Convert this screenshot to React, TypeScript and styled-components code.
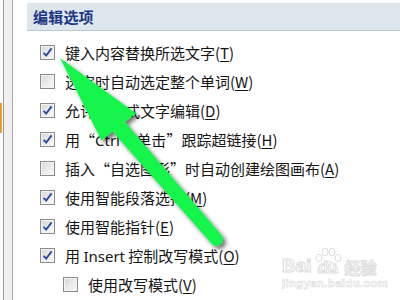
import React from "react"
import styled, { createGlobalStyle } from "styled-components"

const Global = createGlobalStyle`
    html, body {
        margin: 0;
        padding: 0;
        background: #fff;
    }
    body {
        width: 400px;
        height: 300px;
        overflow: hidden;
    }
`

const Page = styled.div`
    position: relative;
    width: 400px;
    height: 300px;
    display: flex;
    overflow: hidden;
    font-family: "Noto Sans CJK SC", "Noto Sans", sans-serif;
    color: #151515;
`

const SideStrip = styled.div`
    width: 3px;
    flex: none;
    display: flex;
    flex-direction: column;
`

const TabMark = styled.div`
    margin-top: 103px;
    width: 2px;
    height: 30px;
    background: linear-gradient(to right, #e88a1a, #f2b04a);
`

const SidePanel = styled.div`
    width: 8px;
    flex: none;
    background: #f0f0f0;
    border-left: 1px solid #9d9d9d;
    border-right: 1px solid #a8a8a8;
`

const Main = styled.div`
    flex: 1;
    padding-left: 14px;
    padding-top: 3px;
`

const Header = styled.div`
    height: 27px;
    display: flex;
    align-items: center;
    padding-left: 6px;
    background: #dee6ed;
    border-bottom: 1px solid #c3c6c9;
    font-size: 15px;
    font-weight: bold;
    color: #1b3682;
    letter-spacing: 0.2px;
`

const List = styled.div`
    padding-top: 7px;
    display: flex;
    flex-direction: column;
`

const Row = styled.div<{ $indent?: boolean }>`
    height: 29px;
    display: flex;
    align-items: center;
    gap: 10px;
    padding-left: ${p => (p.$indent ? "36px" : "13px")};
    font-size: 15px;
    white-space: nowrap;
    u { text-decoration-thickness: 1px; text-underline-offset: 2px; }
    .latin { font-family: "Noto Sans", "Open Sans", sans-serif; }
`

const Quote = styled.span<{ $open?: boolean }>`
    display: inline-block;
    width: 15px;
    text-align: ${p => (p.$open ? "right" : "left")};
`

const Box = styled.span`
    width: 13px;
    height: 13px;
    flex: none;
    border: 1px solid #8b8c8c;
    background: linear-gradient(135deg, #d6d6d6 0%, #ececec 55%, #fbfbfb 100%);
    box-shadow: inset 0 0 0 1px #f4f4f4;
    display: flex;
    align-items: center;
    justify-content: center;
`

const Watermark = styled.div`
    position: absolute;
    left: 282px;
    top: 247px;
    display: flex;
    flex-direction: column;
    align-items: flex-start;
    color: #fff;
    pointer-events: none;
`

const MarkTop = styled.div`
    display: flex;
    align-items: flex-end;
    height: 28px;
    font-family: "Liberation Sans", Arial, sans-serif;
    font-weight: bold;
    font-size: 19px;
    -webkit-text-stroke: 1px #dcdcdc;
    line-height: 1;
`

const Paw = styled.span`
    position: relative;
    width: 30px;
    height: 28px;
    display: inline-flex;
    align-items: flex-end;
    justify-content: center;
    font-size: 15px;
    margin: 0 1px;
`

const CnMark = styled.span`
    font-family: "Noto Sans CJK SC", sans-serif;
    font-size: 16px;
    margin-left: 1px;
    -webkit-text-stroke: 1px #dcdcdc;
`

const MarkUrl = styled.div`
    margin-top: 2px;
    font-family: "Liberation Sans", Arial, sans-serif;
    font-size: 11.5px;
    font-weight: bold;
    color: #fff;
    -webkit-text-stroke: 0.6px #dcdcdc;
    letter-spacing: 0.3px;
`

const Overlay = styled.svg`
    position: absolute;
    left: 0;
    top: 0;
    pointer-events: none;
`

const Check = () => (
    <svg width="11" height="11" viewBox="0 0 11 11">
        <path d="M1.6 5.8 L4.2 8.6 L9.6 1.4" fill="none" stroke="#2c4a9e" strokeWidth="1.9" />
    </svg>
)

const Option: React.FC<{ checked?: boolean; indent?: boolean; children: React.ReactNode }> = ({ checked, indent, children }) => (
    <Row $indent={indent}>
        <Box>{checked && <Check />}</Box>
        <span>{children}</span>
    </Row>
)

const App: React.FC = () => {
    return (
        <Page>
            <Global />
            <SideStrip>
                <TabMark />
            </SideStrip>
            <SidePanel />
            <Main>
                <Header>编辑选项</Header>
                <List>
                    <Option checked>键入内容替换所选文字(<u>T</u>)</Option>
                    <Option>选定时自动选定整个单词(<u>W</u>)</Option>
                    <Option checked>允许拖放式文字编辑(<u>D</u>)</Option>
                    <Option checked>
                        用<Quote $open>“</Quote><span className="latin">Ctrl + </span>单击<Quote>”</Quote>跟踪超链接(<u>H</u>)
                    </Option>
                    <Option>
                        插入<Quote $open>“</Quote>自选图形<Quote>”</Quote>时自动创建绘图画布(<u>A</u>)
                    </Option>
                    <Option checked>使用智能段落选择(<u>M</u>)</Option>
                    <Option checked>使用智能指针(<u>E</u>)</Option>
                    <Option checked>用 <span className="latin">Insert</span> 控制改写模式(<u>O</u>)</Option>
                    <Option indent>使用改写模式(<u>V</u>)</Option>
                </List>
            </Main>

            <Watermark>
                <MarkTop>
                    <span>Bai</span>
                    <Paw>
                        <svg width="30" height="28" viewBox="0 0 30 28" style={{ position: "absolute", left: 0, top: 0 }}>
                            <g fill="#fff" stroke="#dcdcdc" strokeWidth="1">
                                <ellipse cx="6" cy="11" rx="3" ry="3.6" />
                                <ellipse cx="12" cy="5" rx="3" ry="3.8" />
                                <ellipse cx="19" cy="5" rx="3" ry="3.8" />
                                <ellipse cx="25" cy="11" rx="3" ry="3.6" />
                                <path d="M5 26 Q4 17 15 14 Q26 17 25 26 Z" />
                            </g>
                        </svg>
                        <span style={{ position: "relative", color: "#fff", marginBottom: 1 }}>du</span>
                    </Paw>
                    <CnMark>经验</CnMark>
                </MarkTop>
                <MarkUrl>jingyan.baidu.com</MarkUrl>
            </Watermark>

            <Overlay width="400" height="300" viewBox="0 0 400 300">
                <defs>
                    <filter id="sh" x="-20%" y="-20%" width="140%" height="140%">
                        <feDropShadow dx="3" dy="3" stdDeviation="2" floodColor="#000" floodOpacity="0.55" />
                    </filter>
                </defs>
                <path
                    d="M60 58 L136 113.5 L125 122 L221.9 235.8 A6.5 6.5 0 0 1 212.1 244.2 L112.5 131.5 L101.5 140.5 Z"
                    fill="#12f54c"
                    filter="url(#sh)"
                />
            </Overlay>
        </Page>
    )
}

export default App
